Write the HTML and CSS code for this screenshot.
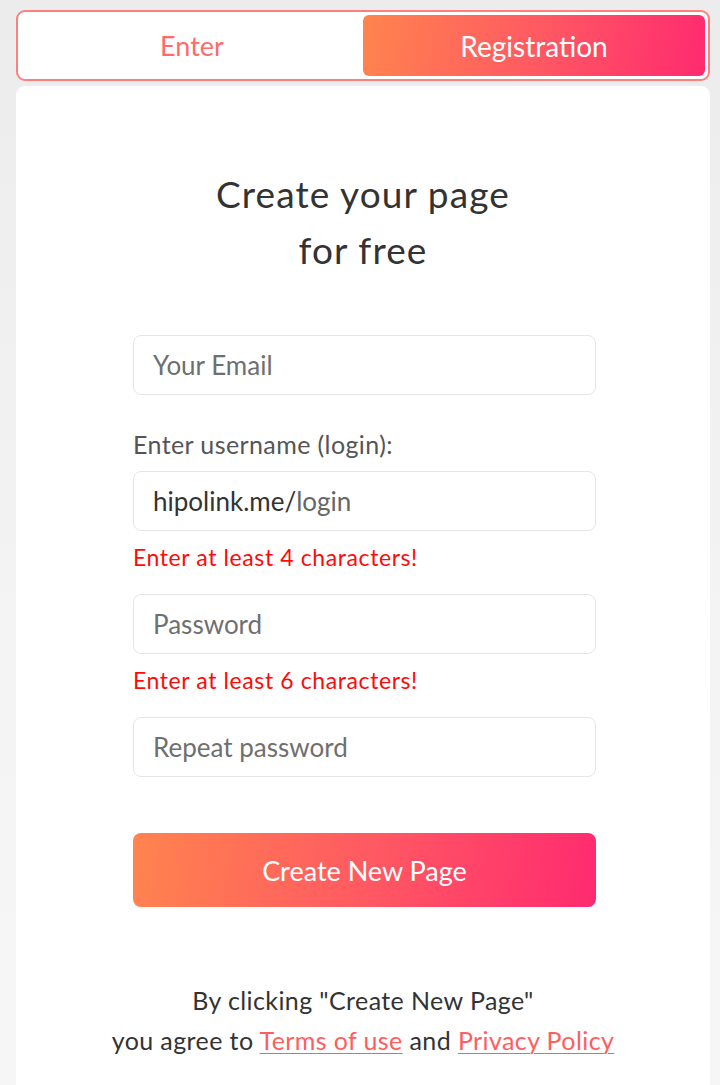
FILE: index.html
```html
<!DOCTYPE html>
<html>
<head>
<meta charset="utf-8">
<link rel="stylesheet" href="styles.css">
</head>
<body>
<div class="page">
  <div class="tabs">
    <div class="tab">Enter</div>
    <div class="tab active">Registration</div>
  </div>
  <div class="card">
    <h1 class="title">Create your page<br>for free</h1>
    <form class="form">
      <div class="field">Your Email</div>
      <div class="label">Enter username (login):</div>
      <div class="field filled"><span class="prefix">hipolink.me/</span>login</div>
      <div class="error">Enter at least 4 characters!</div>
      <div class="field">Password</div>
      <div class="error">Enter at least 6 characters!</div>
      <div class="field">Repeat password</div>
      <div class="btn">Create New Page</div>
    </form>
    <p class="agree">By clicking "Create New Page"<br>you agree to <a href="#">Terms of use</a> and <a href="#">Privacy Policy</a></p>
  </div>
</div>
</body>
</html>
```
FILE: styles.css
```css
html, body {
  margin: 0;
  padding: 0;
}
body {
  width: 720px;
  height: 1085px;
  overflow: hidden;
  background: linear-gradient(180deg, #ececec 0%, #f4f4f4 60%, #f6f6f6 100%);
  font-family: Lato, "Open Sans", sans-serif;
}
.page {
  height: 1085px;
  box-sizing: border-box;
  padding: 10px 10px 0 16px;
  display: flex;
  flex-direction: column;
  gap: 5px;
}
.tabs {
  height: 71px;
  flex: none;
  box-sizing: border-box;
  border: 2px solid #ff7f7f;
  border-radius: 9px;
  background: #fff;
  padding: 3px;
  display: flex;
}
.tab {
  flex: 1;
  display: flex;
  align-items: center;
  justify-content: center;
  font-size: 27px;
  color: #ff6b6b;
  border-radius: 6px;
}
.tab.active {
  background: linear-gradient(100deg, #ff844e 0%, #ff5a62 50%, #ff2a70 100%);
  color: #fff;
  font-size: 28px;
}
.card {
  flex: 1;
  background: #fff;
  border-radius: 9px 9px 0 0;
  display: flex;
  flex-direction: column;
  align-items: center;
}
.title {
  margin: 80px 0 0;
  font-weight: 400;
  font-size: 37px;
  letter-spacing: 1.1px;
  line-height: 56px;
  color: #333;
  text-align: center;
}
.form {
  margin: 57px 0 0 3px;
  width: 463px;
  display: flex;
  flex-direction: column;
}
.field {
  height: 60px;
  box-sizing: border-box;
  border: 1px solid #e6e6e6;
  border-radius: 8px;
  padding: 0 19px;
  display: flex;
  align-items: center;
  font-size: 26px;
  color: #6f6f6f;
}
.field.filled {
  color: #666;
}
.prefix {
  color: #333;
}
.label {
  margin-top: 34px;
  margin-bottom: 12px;
  font-size: 25px;
  letter-spacing: 0.4px;
  line-height: 30px;
  color: #555;
}
.error {
  font-size: 23px;
  letter-spacing: 0.6px;
  line-height: 30px;
  color: #ff0a0a;
  margin: 11px 0 22px;
}
.btn {
  margin-top: 56px;
  height: 74px;
  border-radius: 8px;
  background: linear-gradient(100deg, #ff844e 0%, #ff5a62 50%, #ff2a70 100%);
  color: #fff;
  font-size: 27px;
  display: flex;
  align-items: center;
  justify-content: center;
}
.agree {
  margin: 73px 0 0;
  text-align: center;
  font-size: 25px;
  letter-spacing: 0.4px;
  line-height: 40px;
  color: #333;
}
.agree a {
  color: #ff5e5e;
  text-decoration: underline;
  text-underline-offset: 3px;
  text-decoration-thickness: 1px;
}
```
